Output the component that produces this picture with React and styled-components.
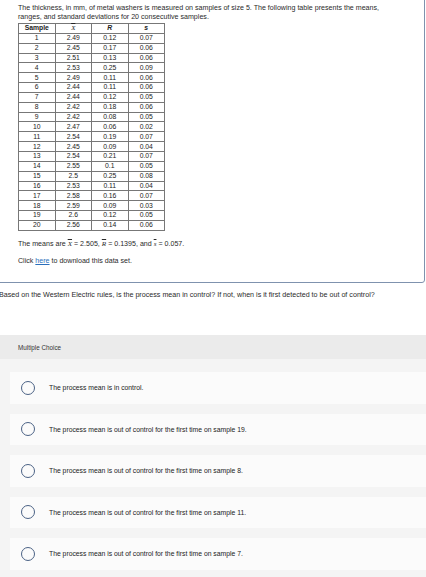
import React from "react";
import styled, { createGlobalStyle } from "styled-components";

const GlobalStyle = createGlobalStyle`
  html, body { margin: 0; padding: 0; background: #ffffff; }
  body { font-family: "Liberation Sans", Arial, sans-serif; color: #222; overflow: hidden; }
  * { box-sizing: border-box; }
`;

const Page = styled.div`
  width: 426px;
  height: 577px;
  overflow: hidden;
  background: #fff;
`;

const ProblemBox = styled.div`
  margin: -6px 1px 0 -6px;
  padding: 9px 0 0 23px;
  height: 289px;
  border: 1px solid #7f92ae;
  border-radius: 0 0 3px 0;
`;

const Para = styled.p`
  margin: 0;
  font-size: 7.1px;
  line-height: 9px;
  color: #2a2a2a;
  width: 385px;
`;

const Table = styled.table`
  border-collapse: collapse;
  margin-top: 1px;
  width: 147px;
  font-size: 6.8px;
  color: #222;
  border: 1px solid #555;
`;

const Th = styled.th`
  height: 9.85px;
  padding: 0;
  border: 1px solid #777;
  font-weight: 700;
  font-style: ${(p) => (p.$italic ? "italic" : "normal")};
  font-family: ${(p) => (p.$serif ? '"Liberation Serif", serif' : "inherit")};
  text-align: center;
  line-height: 8px;
  width: 25%;
`;

const Td = styled.td`
  height: 9.85px;
  padding: 0;
  border: 1px solid #777;
  text-align: center;
  line-height: 8px;
`;

const Bar = styled.span`
  text-decoration: overline;
  font-style: italic;
  font-family: ${(p) => (p.$serif ? '"Liberation Serif", serif' : "inherit")};
  font-weight: ${(p) => (p.$bold ? 700 : 400)};
`;

const Means = styled(Para)`
  margin-top: 9px;
`;

const ClickLine = styled(Para)`
  margin-top: 8px;
`;

const Link = styled.a`
  color: #2a6ebb;
  text-decoration: underline;
`;

const Question = styled.p`
  margin: 8px 0 0 -1px;
  font-size: 7.15px;
  line-height: 9px;
  color: #2a2a2a;
  white-space: nowrap;
`;

const ChoiceSection = styled.div`
  margin-top: 35px;
  background: #f4f4f4;
  height: 300px;
`;

const ChoiceHeader = styled.div`
  height: 24px;
  background: #ebebeb;
  padding-left: 18px;
  display: flex;
  align-items: center;
  font-size: 6.3px;
  color: #333;
`;

const Options = styled.div`
  display: flex;
  flex-direction: column;
  gap: 10px;
  padding: 13px 0 0 10px;
`;

const Option = styled.label`
  display: flex;
  align-items: center;
  height: 31.5px;
  background: #fbfbfb;
  padding-left: 11px;
  font-size: 6.8px;
  color: #222;
`;

const Radio = styled.span`
  width: 14px;
  height: 14px;
  border-radius: 50%;
  border: 1.3px solid #4b6285;
  flex: none;
  margin-right: 14px;
`;

const rows = [
  [1, "2.49", "0.12", "0.07"],
  [2, "2.45", "0.17", "0.06"],
  [3, "2.51", "0.13", "0.06"],
  [4, "2.53", "0.25", "0.09"],
  [5, "2.49", "0.11", "0.06"],
  [6, "2.44", "0.11", "0.06"],
  [7, "2.44", "0.12", "0.05"],
  [8, "2.42", "0.18", "0.06"],
  [9, "2.42", "0.08", "0.05"],
  [10, "2.47", "0.06", "0.02"],
  [11, "2.54", "0.19", "0.07"],
  [12, "2.45", "0.09", "0.04"],
  [13, "2.54", "0.21", "0.07"],
  [14, "2.55", "0.1", "0.05"],
  [15, "2.5", "0.25", "0.08"],
  [16, "2.53", "0.11", "0.04"],
  [17, "2.58", "0.16", "0.07"],
  [18, "2.59", "0.09", "0.03"],
  [19, "2.6", "0.12", "0.05"],
  [20, "2.56", "0.14", "0.06"],
];

const options = [
  "The process mean is in control.",
  "The process mean is out of control for the first time on sample 19.",
  "The process mean is out of control for the first time on sample 8.",
  "The process mean is out of control for the first time on sample 11.",
  "The process mean is out of control for the first time on sample 7.",
];

export default function App() {
  return (
    <Page>
      <GlobalStyle />
      <ProblemBox>
        <Para>
          The thickness, in mm, of metal washers is measured on samples of size 5. The following table presents the means,
          ranges, and standard deviations for 20 consecutive samples.
        </Para>
        <Table>
          <thead>
            <tr>
              <Th>Sample</Th>
              <Th $serif>
                <Bar $serif>X</Bar>
              </Th>
              <Th $italic>R</Th>
              <Th $italic>s</Th>
            </tr>
          </thead>
          <tbody>
            {rows.map((r) => (
              <tr key={r[0]}>
                <Td>{r[0]}</Td>
                <Td>{r[1]}</Td>
                <Td>{r[2]}</Td>
                <Td>{r[3]}</Td>
              </tr>
            ))}
          </tbody>
        </Table>
        <Means>
          The means are <Bar $serif>X</Bar> = 2.505, <Bar $serif>R</Bar> = 0.1395, and <Bar $serif>s</Bar> = 0.057.
        </Means>
        <ClickLine>
          Click <Link href="#">here</Link> to download this data set.
        </ClickLine>
      </ProblemBox>
      <Question>
        Based on the Western Electric rules, is the process mean in control? If not, when is it first detected to be out of control?
      </Question>
      <ChoiceSection>
        <ChoiceHeader>Multiple Choice</ChoiceHeader>
        <Options>
          {options.map((o) => (
            <Option key={o}>
              <Radio />
              {o}
            </Option>
          ))}
        </Options>
      </ChoiceSection>
    </Page>
  );
}
